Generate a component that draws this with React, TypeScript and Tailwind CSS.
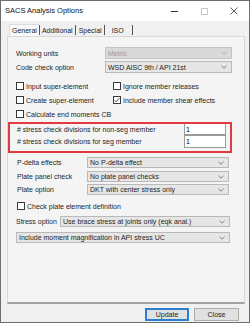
import React from "react";

const font = { fontFamily: '"Liberation Sans", Arial, sans-serif' };

function Chevron({ color = "#666" }: { color?: string }) {
  return (
    <svg width="6" height="4" viewBox="0 0 6 4" className="shrink-0">
      <polyline points="0.5,0.8 3,3.2 5.5,0.8" fill="none" stroke={color} strokeWidth="0.8" />
    </svg>
  );
}

function Select({ text, w, h = 11, disabled = false }: { text: string; w: string; h?: number; disabled?: boolean }) {
  return (
    <div
      className={`${w} flex items-center justify-between border pl-[2px] pr-[4px] ${
        disabled ? "border-[#c4c4c4] bg-[#d9d9d9] text-[#9a9a9a]" : "border-[#b9b9b9] bg-[#e6e6e6] text-[#1e1e1e]"
      }`}
      style={{ height: h }}
    >
      <span className="leading-none whitespace-nowrap">{text}</span>
      <Chevron color={disabled ? "#a8a8a8" : "#666"} />
    </div>
  );
}

function Check({ label, checked = false }: { label: string; checked?: boolean }) {
  return (
    <div className="flex items-center gap-[2px]">
      <div className="w-[8px] h-[8px] border border-[#3a3a3a] bg-white flex items-center justify-center shrink-0">
        {checked && (
          <svg width="6" height="6" viewBox="0 0 6 6">
            <polyline points="0.6,3.2 2.2,4.8 5.4,1" fill="none" stroke="#222" strokeWidth="0.8" />
          </svg>
        )}
      </div>
      <span className="leading-none whitespace-nowrap text-[#1e1e1e]">{label}</span>
    </div>
  );
}

export default function App() {
  return (
    <div
      className="w-[250px] h-[323px] flex flex-col bg-[#f0f0f0] border border-[#6e6e6e] text-[7px] overflow-hidden"
      style={font}
    >
      {/* Title bar */}
      <div className="h-[20px] bg-white flex items-center shrink-0 relative">
        <span className="ml-[4px] text-[7.5px] text-[#111] leading-none">SACS Analysis Options</span>
        <div className="ml-auto flex items-center h-full">
          <div className="w-[30px] h-full flex items-center justify-center">
            <div className="w-[7px] h-px bg-[#333]" />
          </div>
          <div className="w-[30px] h-full flex items-center justify-center">
            <div className="w-[7px] h-[7px] border border-[#c8c8c8]" />
          </div>
          <div className="w-[30px] h-full flex items-center justify-center">
            <svg width="8" height="8" viewBox="0 0 8 8">
              <path d="M0.5 0.5 L7.5 7.5 M7.5 0.5 L0.5 7.5" stroke="#333" strokeWidth="0.8" />
            </svg>
          </div>
        </div>
      </div>

      {/* Tabs */}
      <div className="flex items-end h-[14px] mt-[1px] ml-[8px] shrink-0">
        <div className="flex items-center h-[12px] bg-[#fafafa] border-t border-l border-[#dadada] px-[2px] text-[#222]">
          <span className="leading-none">General</span>
        </div>
        <div className="w-px h-[10px] bg-[#555] mb-[1px]" />
        <div className="flex items-center h-[12px] px-[2px] text-[#222]">
          <span className="leading-none">Additional</span>
        </div>
        <div className="w-px h-[10px] bg-[#555] mb-[1px]" />
        <div className="flex items-center h-[12px] px-[2px] text-[#222] ml-[1px]">
          <span className="leading-none">Special</span>
        </div>
        <div className="w-px h-[10px] bg-[#555] mb-[1px]" />
        <div className="flex items-center h-[12px] pl-[7px] pr-[8px] text-[#222]">
          <span className="leading-none">ISO</span>
        </div>
        <div className="w-px h-[10px] bg-[#555] mb-[1px]" />
      </div>

      {/* Panel */}
      <div className="ml-[6px] mr-[4px] h-[268px] shrink-0 bg-[#f4f4f4] border-t border-l border-r border-[#d9d9d9] border-b-2 border-b-[#a3a3a3] flex flex-col">
        {/* Working units */}
        <div className="flex items-center mt-[10px] h-[12px] pl-[8px]">
          <span className="w-[89px] leading-none text-[#1e1e1e]">Working units</span>
          <Select text="Metric" w="w-[127px]" h={12} disabled />
        </div>
        <div className="flex items-center mt-[2px] h-[12px] pl-[8px]">
          <span className="w-[89px] leading-none text-[#1e1e1e]">Code check option</span>
          <Select text="WSD AISC 9th / API 21st" w="w-[127px]" h={12} />
        </div>

        {/* Checkboxes */}
        <div className="mt-[6px] pl-[8px] grid grid-cols-[97px_1fr] auto-rows-[14px] items-center">
          <Check label="Input super-element" />
          <Check label="Ignore member releases" />
          <Check label="Create super-element" />
          <Check label="Include member shear effects" checked />
          <Check label="Calculate end moments CB" />
        </div>

        {/* Highlighted section */}
        <div className="relative mt-[1px] pb-[4px]">
          <div className="flex items-center h-[13px] pl-[9px] pt-[1px]">
            <span className="w-[167px] leading-none text-[#1e1e1e]"># stress check divisions for non-seg member</span>
            <div className="w-[42px] h-[12px] bg-white border border-[#9a9a9a] flex items-center pl-[1px] leading-none">1</div>
          </div>
          <div className="flex items-center h-[13px] pl-[9px]">
            <span className="w-[167px] leading-none text-[#1e1e1e]"># stress check divisions for seg member</span>
            <div className="w-[42px] h-[13px] bg-white border border-[#9a9a9a] flex items-center pl-[1px] leading-none">1</div>
          </div>
          <div className="absolute left-0 top-0 w-[224px] h-[31px] border-2 border-[#e3393f] pointer-events-none" />
        </div>

        {/* Plate rows */}
        <div className="flex items-center mt-[5px] h-[11px] pl-[9px]">
          <span className="w-[70px] leading-none text-[#1e1e1e]">P-delta effects</span>
          <Select text="No P-delta effect" w="w-[142px]" />
        </div>
        <div className="flex items-center mt-[3px] h-[11px] pl-[9px]">
          <span className="w-[70px] leading-none text-[#1e1e1e]">Plate panel check</span>
          <Select text="No plate panel checks" w="w-[142px]" />
        </div>
        <div className="flex items-center mt-[2px] h-[11px] pl-[9px]">
          <span className="w-[70px] leading-none text-[#1e1e1e]">Plate option</span>
          <Select text="DKT with center stress only" w="w-[142px]" />
        </div>

        <div className="flex items-center mt-[4px] h-[14px] pl-[9px]">
          <Check label="Check plate element definition" />
        </div>

        <div className="flex items-center mt-[3px] h-[11px] pl-[8px]">
          <span className="w-[44px] leading-none text-[#1e1e1e]">Stress option</span>
          <Select text="Use brace stress at joints only (eqk anal.)" w="w-[170px]" />
        </div>
        <div className="flex items-center mt-[5px] h-[11px] pl-[8px]">
          <Select text="Include moment magnification in API stress UC" w="w-[214px]" />
        </div>
      </div>

      {/* Buttons */}
      <div className="flex justify-end gap-[5px] mt-[4px] pr-[10px]">
        <div className="w-[44px] h-[13px] border-2 border-[#2a7fd4] bg-[#e1e1e1] flex items-center justify-center text-[#1e1e1e] leading-none">
          Update
        </div>
        <div className="w-[45px] h-[13px] border border-[#adadad] bg-[#e1e1e1] flex items-center justify-center text-[#1e1e1e] leading-none">
          Close
        </div>
      </div>
    </div>
  );
}
